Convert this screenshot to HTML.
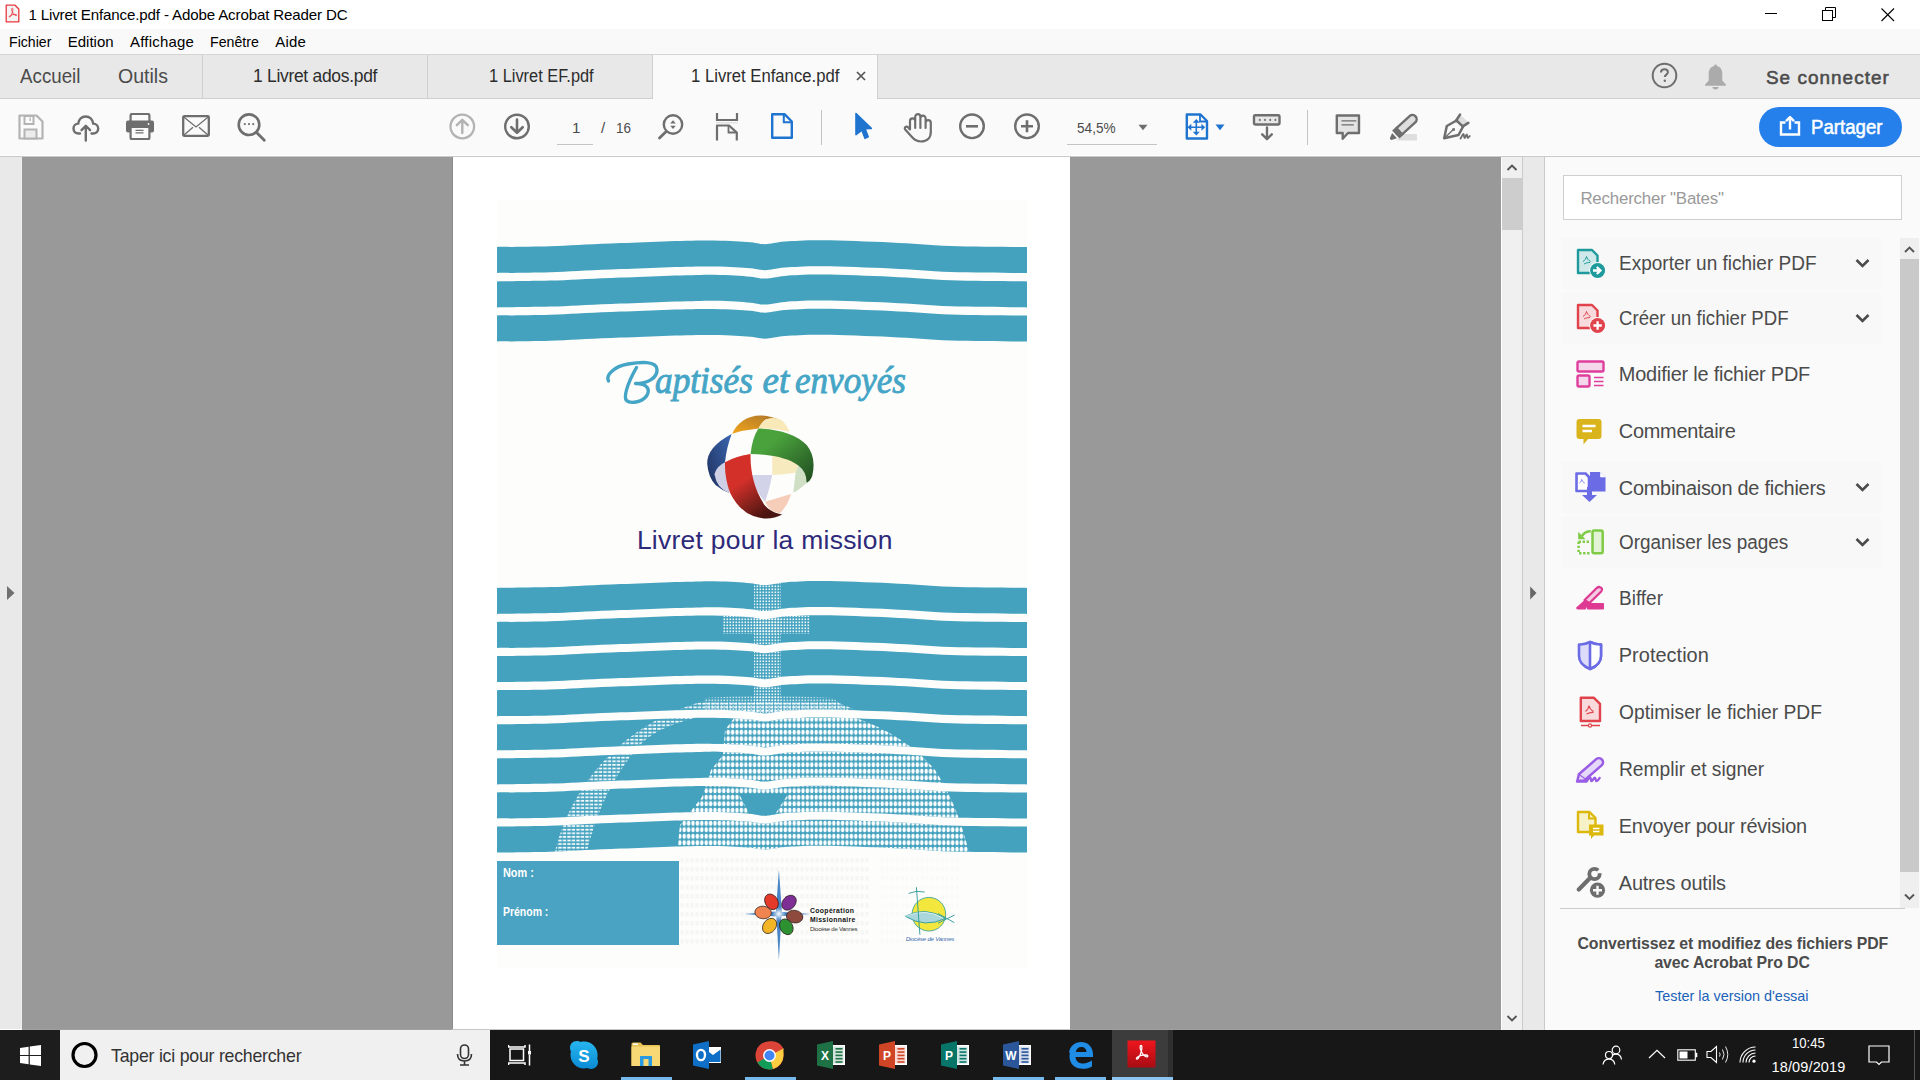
<!DOCTYPE html><html><head><meta charset="utf-8"><style>
html,body{margin:0;padding:0;width:1920px;height:1080px;overflow:hidden;background:#fff}
body{position:relative;font-family:"Liberation Sans",sans-serif}
.r{position:absolute;display:block}
.t{position:absolute;white-space:nowrap;line-height:1;font-family:"Liberation Sans",sans-serif}
</style></head><body>
<div class="r" style="left:0px;top:0px;width:1920px;height:29px;background:#ffffff;"></div>
<div class="r" style="left:0px;top:29px;width:1920px;height:25px;background:#f9f9f9;"></div>
<div class="r" style="left:0px;top:54px;width:1920px;height:1px;background:#d4d4d4;"></div>
<div class="r" style="left:0px;top:55px;width:1920px;height:43px;background:#e8e8e8;"></div>
<div class="r" style="left:0px;top:98px;width:1920px;height:1px;background:#cfcfcf;"></div>
<div class="r" style="left:0px;top:99px;width:1920px;height:56px;background:#fafafa;"></div>
<div class="r" style="left:0px;top:155px;width:1920px;height:1px;background:#ffffff;"></div>
<div class="r" style="left:0px;top:156px;width:1920px;height:1px;background:#c9c9c9;"></div>
<div class="r" style="left:0px;top:157px;width:21px;height:873px;background:#e9e9e9;"></div>
<div class="r" style="left:21px;top:157px;width:1px;height:873px;background:#efefef;"></div>
<div class="r" style="left:22px;top:157px;width:1479px;height:873px;background:#999999;"></div>
<div class="r" style="left:1501px;top:157px;width:1px;height:873px;background:#ffffff;"></div>
<div class="r" style="left:1502px;top:157px;width:20px;height:873px;background:#f0f0f0;"></div>
<div class="r" style="left:1522px;top:157px;width:1px;height:873px;background:#cacaca;"></div>
<div class="r" style="left:1523px;top:157px;width:21px;height:873px;background:#e9e9e9;"></div>
<div class="r" style="left:1544px;top:157px;width:1px;height:873px;background:#cacaca;"></div>
<div class="r" style="left:1545px;top:157px;width:375px;height:873px;background:#fafafa;"></div>
<div class="r" style="left:0px;top:1030px;width:1920px;height:50px;background:#171717;"></div>
<div class="r" style="left:0px;top:1030px;width:60px;height:50px;background:#1d1d1d;"></div>
<svg class="r" style="left:5px;top:4px;" width="15" height="19" viewBox="0 0 15 19"><path d="M1.2 1.2 H10 L13.8 5 V17.8 H1.2 Z" fill="#f4f4f4" stroke="#e8393f" stroke-width="1.3" stroke-linejoin="round"/><path d="M7.4 4.2 c-1 0 -1 1.8 0 3.8 c1 2 2.5 3.5 3.4 3.6 c1.3 0.2 1.2 -1 0 -1.2 c-2 -0.3 -5 0.5 -6.2 1.6 c-0.9 0.9 0 1.6 0.8 0.6 c1 -1.2 1.8 -3.2 2.2 -5 c0.3 -1.4 0.4 -3.4 -0.2 -3.4 z" fill="none" stroke="#e8393f" stroke-width="0.9"/></svg>
<div class="t" style="left:28.40px;top:6.90px;font-size:15.12px;letter-spacing:-0.147px;color:#000;">1 Livret Enfance.pdf - Adobe Acrobat Reader DC</div>
<div class="r" style="left:1765px;top:13px;width:12px;height:1px;background:#000;"></div>
<svg class="r" style="left:1820px;top:6px;" width="18" height="16" viewBox="0 0 18 16"><rect x="2.5" y="4.5" width="10" height="10" fill="none" stroke="#000" stroke-width="1"/><path d="M5.5 4.5 V1.5 H15.5 V11.5 H12.5" fill="none" stroke="#000" stroke-width="1"/></svg>
<svg class="r" style="left:1880px;top:7px;" width="16" height="16" viewBox="0 0 16 16"><path d="M1.5 1.5 L14 14 M14 1.5 L1.5 14" stroke="#000" stroke-width="1.1"/></svg>
<div class="t" style="left:8.60px;top:34.92px;font-size:14.97px;letter-spacing:0.000px;color:#000;transform:scaleX(0.9437);transform-origin:0 0;">Fichier</div>
<div class="t" style="left:67.80px;top:34.92px;font-size:14.97px;letter-spacing:0.003px;color:#000;">Edition</div>
<div class="t" style="left:130.00px;top:34.92px;font-size:14.97px;letter-spacing:0.207px;color:#000;">Affichage</div>
<div class="t" style="left:210.00px;top:34.92px;font-size:14.97px;letter-spacing:0.000px;color:#000;transform:scaleX(0.9459);transform-origin:0 0;">Fenêtre</div>
<div class="t" style="left:275.30px;top:34.92px;font-size:14.97px;letter-spacing:0.181px;color:#000;">Aide</div>
<div class="r" style="left:202px;top:55px;width:1px;height:43px;background:#cfcfcf;"></div>
<div class="r" style="left:427px;top:55px;width:1px;height:43px;background:#cfcfcf;"></div>
<div class="r" style="left:652px;top:55px;width:1px;height:44px;background:#cfcfcf;"></div>
<div class="r" style="left:653px;top:55px;width:224px;height:44px;background:#fafafa;"></div>
<div class="r" style="left:877px;top:55px;width:1px;height:44px;background:#cfcfcf;"></div>
<div class="t" style="left:19.50px;top:65.89px;font-size:20.20px;letter-spacing:0.000px;color:#4b4b4b;transform:scaleX(0.9288);transform-origin:0 0;">Accueil</div>
<div class="t" style="left:117.50px;top:65.89px;font-size:20.20px;letter-spacing:0.000px;color:#4b4b4b;transform:scaleX(0.9682);transform-origin:0 0;">Outils</div>
<div class="t" style="left:253.00px;top:68.03px;font-size:17.44px;letter-spacing:-0.281px;color:#2c2c2c;">1 Livret ados.pdf</div>
<div class="t" style="left:488.60px;top:68.23px;font-size:17.44px;letter-spacing:0.000px;color:#2c2c2c;transform:scaleX(0.9388);transform-origin:0 0;">1 Livret EF.pdf</div>
<div class="t" style="left:691.00px;top:68.03px;font-size:17.44px;letter-spacing:0.000px;color:#2c2c2c;transform:scaleX(0.9563);transform-origin:0 0;">1 Livret Enfance.pdf</div>
<svg class="r" style="left:856px;top:71px;" width="10" height="10" viewBox="0 0 10 10"><path d="M1 1 L9 9 M9 1 L1 9" stroke="#555" stroke-width="1.7"/></svg>
<svg class="r" style="left:1651px;top:62px;" width="27" height="27" viewBox="0 0 27 27"><circle cx="13.5" cy="13.5" r="11.8" fill="none" stroke="#6e6e6e" stroke-width="2"/><path d="M10 10.5 c0 -2 1.5 -3.2 3.5 -3.2 c2 0 3.4 1.2 3.4 3 c0 2.3 -3.1 2.4 -3.1 4.8" fill="none" stroke="#6e6e6e" stroke-width="2"/><circle cx="13.8" cy="18.8" r="1.2" fill="#6e6e6e"/></svg>
<svg class="r" style="left:1704px;top:63px;" width="23" height="27" viewBox="0 0 23 27"><path d="M11.5 1.5 c1.2 0 1.4 0.8 1.4 1.6 c3.6 0.8 5.4 3.7 5.4 7.6 v6.8 l3.6 4 v1.3 H1.1 v-1.3 l3.6 -4 v-6.8 c0 -3.9 1.8 -6.8 5.4 -7.6 c0 -0.8 0.2 -1.6 1.4 -1.6z" fill="#ababab"/><path d="M8.3 24 h6.4 c-0.5 1.7 -1.7 2.5 -3.2 2.5 s-2.7 -0.8 -3.2 -2.5z" fill="#ababab"/></svg>
<div class="t" style="left:1765.90px;top:68.50px;font-size:18.90px;letter-spacing:1.059px;color:#4b4b4b;-webkit-text-stroke:0.55px #4b4b4b;">Se connecter</div>
<svg class="r" style="left:18px;top:114px;" width="26" height="26" viewBox="0 0 26 26"><path d="M1.5 1.5 H18.5 L24.5 7.5 V24.5 H1.5 Z" fill="none" stroke="#b3b3b3" stroke-width="2.2" stroke-linejoin="round"/><rect x="6.5" y="2" width="9" height="8" fill="none" stroke="#b3b3b3" stroke-width="2"/><rect x="11.5" y="3.5" width="1.3" height="3.5" fill="#b3b3b3"/><rect x="6.5" y="15.5" width="12" height="9" fill="#ececec" stroke="#b3b3b3" stroke-width="2"/></svg>
<svg class="r" style="left:72px;top:114px;" width="28" height="28" viewBox="0 0 28 28"><path d="M8 19.5 H6.5 C3.5 19.5 1.5 17.3 1.5 14.5 C1.5 11.7 3.6 9.6 6.2 9.6 C6.8 5.3 9.8 2.5 13.7 2.5 C17.6 2.5 20.6 5.3 21.2 9.6 C24 9.6 26.2 11.8 26.2 14.6 C26.2 17.4 24.1 19.5 21.3 19.5 H19.5" fill="none" stroke="#6e6e6e" stroke-width="2.4" stroke-linecap="round"/><path d="M13.8 26.5 V12.3 M9.5 16.2 L13.8 11.8 L18.1 16.2" fill="none" stroke="#6e6e6e" stroke-width="2.4" stroke-linecap="round" stroke-linejoin="round"/></svg>
<svg class="r" style="left:126px;top:113px;" width="28" height="27" viewBox="0 0 28 27"><rect x="4.6" y="1" width="18.8" height="9" rx="1.5" fill="none" stroke="#6e6e6e" stroke-width="2.2"/><rect x="0" y="7.5" width="28" height="12" rx="2" fill="#6e6e6e"/><rect x="4.6" y="14" width="18.8" height="12" rx="1" fill="#fafafa" stroke="#6e6e6e" stroke-width="2.2"/><path d="M9.5 17.4 H17.5 M9.5 19.8 H17.5" stroke="#6e6e6e" stroke-width="1.2"/><circle cx="22.5" cy="11" r="0.9" fill="#fafafa"/></svg>
<svg class="r" style="left:182px;top:115px;" width="28" height="22" viewBox="0 0 28 22"><rect x="1.2" y="1.2" width="25.6" height="19.6" rx="1" fill="none" stroke="#6e6e6e" stroke-width="2.3"/><path d="M1.5 1.8 L14 12 L26.5 1.8 M1.8 20.2 L11 12.2 M26.2 20.2 L17 12.2" fill="none" stroke="#6e6e6e" stroke-width="1.3"/></svg>
<svg class="r" style="left:236px;top:112px;" width="31" height="31" viewBox="0 0 31 31"><circle cx="13" cy="12.7" r="10.3" fill="none" stroke="#6e6e6e" stroke-width="2.6"/><path d="M20.3 20.2 L28.3 28.3" stroke="#6e6e6e" stroke-width="2.8" stroke-linecap="round"/><circle cx="8.8" cy="12.1" r="1.1" fill="#6e6e6e"/><circle cx="13" cy="12.1" r="1.1" fill="#6e6e6e"/><circle cx="17.2" cy="12.1" r="1.1" fill="#6e6e6e"/></svg>
<svg class="r" style="left:449px;top:113px;" width="27" height="27" viewBox="0 0 27 27"><circle cx="13.3" cy="13.5" r="11.8" fill="none" stroke="#b3b3b3" stroke-width="2.3"/><path d="M13.3 20 V7.3 M7.8 12.2 L13.3 6.8 L18.8 12.2" fill="none" stroke="#b3b3b3" stroke-width="2.4" stroke-linecap="round" stroke-linejoin="round"/></svg>
<svg class="r" style="left:504px;top:113px;" width="27" height="27" viewBox="0 0 27 27"><circle cx="13" cy="13.5" r="11.8" fill="none" stroke="#6e6e6e" stroke-width="2.4"/><path d="M13 6.5 V19.5 M7.3 14.2 L13 19.7 L18.7 14.2" fill="none" stroke="#6e6e6e" stroke-width="2.6" stroke-linecap="round" stroke-linejoin="round"/></svg>
<div class="t" style="left:571.90px;top:120.20px;font-size:15.12px;letter-spacing:0.000px;color:#4b4b4b;">1</div>
<div class="r" style="left:557px;top:144px;width:36px;height:1px;background:#c4c4c4;"></div>
<div class="t" style="left:601.00px;top:120.20px;font-size:15.12px;letter-spacing:0.000px;color:#4b4b4b;">/</div>
<div class="t" style="left:616.00px;top:120.20px;font-size:15.12px;letter-spacing:0.000px;color:#4b4b4b;transform:scaleX(0.8924);transform-origin:0 0;">16</div>
<svg class="r" style="left:657px;top:113px;" width="28" height="27" viewBox="0 0 28 27"><circle cx="16" cy="11.5" r="9.2" fill="none" stroke="#6e6e6e" stroke-width="2.4"/><path d="M9.2 18.5 L2.5 25" stroke="#6e6e6e" stroke-width="2.8" stroke-linecap="round"/><path d="M13.2 10.5 L16 7.3 L18.8 10.5 Z M13.2 12.8 L16 16 L18.8 12.8 Z" fill="#6e6e6e"/></svg>
<svg class="r" style="left:715px;top:112px;" width="24" height="30" viewBox="0 0 24 30"><path d="M2 1 V8 H22 V1" fill="none" stroke="#6e6e6e" stroke-width="2.2"/><rect x="1" y="10.2" width="22" height="1.2" fill="#dddddd"/><path d="M2 28.5 V13.5 H14 L21.8 20.6 V28.5" fill="none" stroke="#6e6e6e" stroke-width="2.2" stroke-linejoin="round"/><path d="M13.5 13.8 V20.5 H21.5" fill="none" stroke="#6e6e6e" stroke-width="1.8"/></svg>
<svg class="r" style="left:770px;top:112px;" width="24" height="28" viewBox="0 0 24 28"><path d="M2.2 2.2 H14.5 L21.8 9.5 V25.8 H2.2 Z" fill="none" stroke="#1f74d0" stroke-width="2.4" stroke-linejoin="round"/><path d="M13.8 2.5 V10.2 H21.5" fill="none" stroke="#1f74d0" stroke-width="2"/></svg>
<div class="r" style="left:821px;top:110px;width:1px;height:35px;background:#c4c4c4;"></div>
<svg class="r" style="left:854px;top:112px;" width="19" height="29" viewBox="0 0 19 29"><path d="M2 1.5 L17.3 16.4 L11 16.6 L14.2 24.8 L11 26.3 L7.9 18.2 L2 22.6 Z" fill="#1f74d0" stroke="#1f74d0" stroke-width="1.6" stroke-linejoin="round"/></svg>
<svg class="r" style="left:902px;top:112px;" width="31" height="31" viewBox="0 0 31 31"><path d="M8 17.5 V9 A2.6 2.6 0 0 1 13.2 9 V16 M13.2 9 V4.8 A2.6 2.6 0 0 1 18.4 4.8 V16 M18.4 6.3 A2.6 2.6 0 0 1 23.6 6.3 V16 M23.6 10.8 A2.6 2.6 0 0 1 28.8 10.8 V20 C28.8 26 25 29.5 19 29.5 C14.5 29.5 12 27.5 9.5 24.5 L3.2 17.5 C2 16 3.5 14 5.5 14.8 L8 17.5" fill="none" stroke="#6e6e6e" stroke-width="2.2" stroke-linejoin="round" stroke-linecap="round"/></svg>
<svg class="r" style="left:958px;top:112px;" width="28" height="28" viewBox="0 0 28 28"><circle cx="14" cy="14.3" r="11.8" fill="none" stroke="#6e6e6e" stroke-width="2.4"/><path d="M8 14.3 H20" stroke="#6e6e6e" stroke-width="2.6"/></svg>
<svg class="r" style="left:1013px;top:112px;" width="28" height="28" viewBox="0 0 28 28"><circle cx="14" cy="14.3" r="11.8" fill="none" stroke="#6e6e6e" stroke-width="2.4"/><path d="M8 14.3 H20 M14 8.3 V20.3" stroke="#6e6e6e" stroke-width="2.6"/></svg>
<div class="t" style="left:1077.40px;top:120.00px;font-size:15.12px;letter-spacing:0.000px;color:#4b4b4b;transform:scaleX(0.9007);transform-origin:0 0;">54,5%</div>
<svg class="r" style="left:1138px;top:124px;" width="10" height="7" viewBox="0 0 10 7"><path d="M0.5 0.8 H9.5 L5 6.2 Z" fill="#6e6e6e"/></svg>
<div class="r" style="left:1067px;top:144px;width:90px;height:1px;background:#c4c4c4;"></div>
<svg class="r" style="left:1184px;top:112px;" width="26" height="29" viewBox="0 0 26 29"><path d="M2.8 2.5 H16.5 L23 9 V26.5 H2.8 Z" fill="none" stroke="#1f74d0" stroke-width="2.4" stroke-linejoin="round"/><path d="M16 2.5 V9.5 H23" fill="none" stroke="#1f74d0" stroke-width="1.8"/><path d="M12.3 9 V21.5 M5.5 15.3 H19.2" stroke="#1f74d0" stroke-width="1.6"/><path d="M12.3 7 L8.8 10.8 H15.8 Z M12.3 23.5 L8.8 19.7 H15.8 Z M3.5 15.3 L7.3 11.8 V18.8 Z M21.2 15.3 L17.4 11.8 V18.8 Z" fill="#1f74d0"/></svg>
<svg class="r" style="left:1215px;top:124px;" width="10" height="7" viewBox="0 0 10 7"><path d="M0.5 0.5 H9.5 L5 6.2 Z" fill="#1f74d0"/></svg>
<svg class="r" style="left:1252px;top:113px;" width="30" height="29" viewBox="0 0 30 29"><rect x="2" y="2.2" width="25.5" height="9.3" rx="1.2" fill="#e8e8e8" stroke="#6e6e6e" stroke-width="2.4"/><path d="M6.5 6.9 l1.3 -1.3 l1.3 1.3 l-1.3 1.3 z M11.7 6.9 l1.3 -1.3 l1.3 1.3 l-1.3 1.3 z M16.9 6.9 l1.3 -1.3 l1.3 1.3 l-1.3 1.3 z M22.1 6.9 l1.3 -1.3 l1.3 1.3 l-1.3 1.3 z" fill="#6e6e6e"/><path d="M15 14.5 V26 M10.2 21.3 L15 26.2 L19.8 21.3" fill="none" stroke="#6e6e6e" stroke-width="2.4" stroke-linecap="round" stroke-linejoin="round"/></svg>
<div class="r" style="left:1307px;top:110px;width:1px;height:35px;background:#c4c4c4;"></div>
<svg class="r" style="left:1334px;top:113px;" width="28" height="29" viewBox="0 0 28 29"><path d="M2.8 2.5 H25 V20 H14 L8.7 25.8 V20 H2.8 Z" fill="#e3e3e3" stroke="#6e6e6e" stroke-width="2.4" stroke-linejoin="round"/><path d="M7.5 7.8 H22.3 M7.5 11.8 H19.8" stroke="#6e6e6e" stroke-width="1.3"/></svg>
<svg class="r" style="left:1380px;top:106px;" width="40" height="40" viewBox="0 0 40 40"><path d="M16.5 34.6 L23 28.1 H37 V34.6 Z" fill="#dedede"/><g transform="translate(16,28.3) rotate(-42.5)"><rect x="1" y="-4.2" width="25.5" height="8.4" rx="4.2" fill="#dedede" stroke="#6e6e6e" stroke-width="2.4"/><rect x="-0.3" y="-5.4" width="6" height="10.8" fill="#6e6e6e"/><path d="M-2 -3.6 L-7.2 -1.2 Q-8.2 0 -7.2 1.2 L-2 3.6 Z" fill="#6e6e6e"/></g></svg>
<svg class="r" style="left:1440px;top:106px;" width="40" height="40" viewBox="0 0 40 40"><path d="M20 8.5 L28.5 16.5 L23 20.5 L16.5 14.5 Z" fill="#dedede"/><path d="M4.2 32.3 L6.8 20 L16.5 14.5 L23 20.7 L18.5 29 Z" fill="none" stroke="#6e6e6e" stroke-width="2.5" stroke-linejoin="round"/><path d="M16 14.8 L20 8.6 M22.8 20.3 L28.3 16.8" stroke="#6e6e6e" stroke-width="2.6" stroke-linecap="round"/><path d="M5 31.5 L13.4 23.5" stroke="#6e6e6e" stroke-width="1.3"/><rect x="12.3" y="22.2" width="2.6" height="2.6" fill="#6e6e6e"/><path d="M20.5 32.5 c1 -1 2 -4.5 3 -4.5 c0.8 0 0.2 4 1 4 c0.8 0 1.3 -3.6 2.3 -3.6 c0.7 0 0.1 3.6 1 3.6 c0.7 0 1.2 -1.5 2 -2" fill="none" stroke="#6e6e6e" stroke-width="1.8" stroke-linecap="round" stroke-linejoin="round"/></svg>
<div class="r" style="left:1759px;top:107px;width:143px;height:40px;background:#2680eb;border-radius:20px;"></div>
<svg class="r" style="left:1779px;top:115px;" width="22" height="21" viewBox="0 0 22 21"><path d="M6.5 7.5 H2 V19.5 H20 V7.5 H15.5" fill="none" stroke="#fff" stroke-width="2.4"/><path d="M11 14.5 V2.5 M7 6.2 L11 2 L15 6.2" fill="none" stroke="#fff" stroke-width="2.4" stroke-linejoin="round"/></svg>
<div class="t" style="left:1811.00px;top:118.38px;font-size:19.62px;letter-spacing:0.000px;color:#ffffff;transform:scaleX(0.9502);transform-origin:0 0;-webkit-text-stroke:0.5px #ffffff;">Partager</div>
<svg class="r" style="left:5px;top:584px;" width="12" height="18" viewBox="0 0 12 18"><path d="M2 2 L9.5 9 L2 16 Z" fill="#707070"/></svg>
<svg class="r" style="left:1527px;top:585px;" width="11" height="16" viewBox="0 0 11 16"><path d="M3.2 1.5 L9.5 8 L3.2 14.5 Z" fill="#666"/></svg>
<div class="r" style="left:1502px;top:178px;width:20px;height:52px;background:#cdcdcd;"></div>
<svg class="r" style="left:1504px;top:161px;" width="16" height="12" viewBox="0 0 16 12"><path d="M3.5 9 L8 4.5 L12.5 9" fill="none" stroke="#555" stroke-width="1.9"/></svg>
<svg class="r" style="left:1504px;top:1013px;" width="16" height="12" viewBox="0 0 16 12"><path d="M3.5 3 L8 7.5 L12.5 3" fill="none" stroke="#555" stroke-width="1.9"/></svg>
<div class="r" style="left:452px;top:157px;width:618px;height:873px;background:#ffffff;"></div>
<div class="r" style="left:452px;top:157px;width:1px;height:873px;background:#8c8c8c;"></div>
<div class="r" style="left:22px;top:1029px;width:430px;height:1px;background:#a0a0a0;"></div>
<div class="r" style="left:452px;top:1029px;width:618px;height:1px;background:#c6c6c6;"></div>
<div class="r" style="left:1070px;top:1029px;width:431px;height:1px;background:#a0a0a0;"></div>
<div class="r" style="left:0px;top:1029px;width:21px;height:1px;background:#ffffff;"></div>
<div class="r" style="left:497px;top:200px;width:530px;height:768px;background:#fdfdfb;"></div>
<svg class="r" style="left:452px;top:157px;" width="618" height="873" viewBox="452 157 618 873"><g fill="#45a2bf"><path d="M497 247.00 C505.8 246.87 531.0 246.78 550.0 246.20 C569.0 245.62 585.8 244.45 611.0 243.50 C636.2 242.55 678.3 240.75 701.0 240.50 C723.7 240.25 736.3 241.38 747.0 242.00 C757.7 242.62 758.7 244.28 765.0 244.20 C771.3 244.12 775.3 242.17 785.0 241.50 C794.7 240.83 805.3 240.05 823.0 240.20 C840.7 240.35 869.7 241.45 891.0 242.40 C912.3 243.35 928.3 245.13 951.0 245.90 C973.7 246.67 1014.3 246.82 1027.0 247.00 L1027 273.00 C1014.3 272.82 973.7 272.67 951.0 271.90 C928.3 271.13 912.3 269.35 891.0 268.40 C869.7 267.45 840.7 266.35 823.0 266.20 C805.3 266.05 794.7 266.83 785.0 267.50 C775.3 268.17 771.3 270.12 765.0 270.20 C758.7 270.28 757.7 268.62 747.0 268.00 C736.3 267.38 723.7 266.25 701.0 266.50 C678.3 266.75 636.2 268.55 611.0 269.50 C585.8 270.45 569.0 271.62 550.0 272.20 C531.0 272.78 505.8 272.87 497.0 273.00 Z"/><path d="M497 281.40 C505.8 281.27 531.0 281.18 550.0 280.60 C569.0 280.02 585.8 278.85 611.0 277.90 C636.2 276.95 678.3 275.15 701.0 274.90 C723.7 274.65 736.3 275.78 747.0 276.40 C757.7 277.02 758.7 278.68 765.0 278.60 C771.3 278.52 775.3 276.57 785.0 275.90 C794.7 275.23 805.3 274.45 823.0 274.60 C840.7 274.75 869.7 275.85 891.0 276.80 C912.3 277.75 928.3 279.53 951.0 280.30 C973.7 281.07 1014.3 281.22 1027.0 281.40 L1027 307.40 C1014.3 307.22 973.7 307.07 951.0 306.30 C928.3 305.53 912.3 303.75 891.0 302.80 C869.7 301.85 840.7 300.75 823.0 300.60 C805.3 300.45 794.7 301.23 785.0 301.90 C775.3 302.57 771.3 304.52 765.0 304.60 C758.7 304.68 757.7 303.02 747.0 302.40 C736.3 301.78 723.7 300.65 701.0 300.90 C678.3 301.15 636.2 302.95 611.0 303.90 C585.8 304.85 569.0 306.02 550.0 306.60 C531.0 307.18 505.8 307.27 497.0 307.40 Z"/><path d="M497 315.50 C505.8 315.37 531.0 315.28 550.0 314.70 C569.0 314.12 585.8 312.95 611.0 312.00 C636.2 311.05 678.3 309.25 701.0 309.00 C723.7 308.75 736.3 309.88 747.0 310.50 C757.7 311.12 758.7 312.78 765.0 312.70 C771.3 312.62 775.3 310.67 785.0 310.00 C794.7 309.33 805.3 308.55 823.0 308.70 C840.7 308.85 869.7 309.95 891.0 310.90 C912.3 311.85 928.3 313.63 951.0 314.40 C973.7 315.17 1014.3 315.32 1027.0 315.50 L1027 341.50 C1014.3 341.32 973.7 341.17 951.0 340.40 C928.3 339.63 912.3 337.85 891.0 336.90 C869.7 335.95 840.7 334.85 823.0 334.70 C805.3 334.55 794.7 335.33 785.0 336.00 C775.3 336.67 771.3 338.62 765.0 338.70 C758.7 338.78 757.7 337.12 747.0 336.50 C736.3 335.88 723.7 334.75 701.0 335.00 C678.3 335.25 636.2 337.05 611.0 338.00 C585.8 338.95 569.0 340.12 550.0 340.70 C531.0 341.28 505.8 341.37 497.0 341.50 Z"/></g></svg>
<svg class="r" style="left:600px;top:355px" width="65" height="55" viewBox="600 355 65 55"><path d="M608.5 381 C605.5 375 614 366.5 628 364 C640 362 656.5 360.5 657 369.5 C657.5 378.5 647 383.5 635.5 383.5 C648 383.5 650.5 390 646.5 396 C642 402.5 630 404 626.5 400.5 C623.5 397 627 384 636.5 367.5" fill="none" stroke="#45a5c6" stroke-width="3.4" stroke-linecap="round" stroke-linejoin="round"/></svg>
<div class="t" style="left:655px;top:361.5px;font-family:'Liberation Serif',serif;font-style:italic;font-size:37px;line-height:1;color:#45a5c6;-webkit-text-stroke:0.9px #45a5c6;transform:scaleX(0.953);transform-origin:0 0;">aptisés</div>
<div class="t" style="left:762.5px;top:361.5px;font-family:'Liberation Serif',serif;font-style:italic;font-size:37px;line-height:1;color:#45a5c6;-webkit-text-stroke:0.9px #45a5c6;transform:scaleX(1.0);transform-origin:0 0;">et</div>
<div class="t" style="left:795px;top:361.5px;font-family:'Liberation Serif',serif;font-style:italic;font-size:37px;line-height:1;color:#45a5c6;-webkit-text-stroke:0.9px #45a5c6;transform:scaleX(0.948);transform-origin:0 0;">envoyés</div>
<svg class="r" style="left:700px;top:405px" width="120" height="120" viewBox="0 0 1080 1080">
<defs>
<linearGradient id="gor" x1="0" y1="1" x2="1" y2="0"><stop offset="0" stop-color="#f2a51c"/><stop offset="1" stop-color="#a9742a"/></linearGradient>
<linearGradient id="gbl" x1="1" y1="0" x2="0" y2="1"><stop offset="0" stop-color="#3a66b0"/><stop offset="1" stop-color="#1f2f5a"/></linearGradient>
<linearGradient id="ggr" x1="0" y1="0" x2="1" y2="1"><stop offset="0.3" stop-color="#4aa23c"/><stop offset="1" stop-color="#1f4a20"/></linearGradient>
<linearGradient id="grd" x1="0" y1="0" x2="0.6" y2="1"><stop offset="0.45" stop-color="#d3302a"/><stop offset="1" stop-color="#4a1510"/></linearGradient>
</defs>
<path d="M285 262 Q60 380 65 530 Q75 650 140 720 Q200 770 260 790 L225 515 Q240 380 285 262 Z" fill="url(#gbl)"/>
<path d="M130 620 Q150 550 225 515 L262 790 Q150 750 130 620 Z" fill="#cfd0e6"/>
<path d="M290 258 C350 120 520 30 750 150 Q640 110 590 130 Q550 160 525 212 Q400 225 290 258 Z" fill="url(#gor)"/>
<path d="M525 212 Q570 120 660 118 Q720 125 750 150 Q790 190 805 240 Q660 205 525 212 Z" fill="#f9e9b8"/>
<path d="M650 440 Q800 470 885 545 L860 610 Q760 625 650 630 Z" fill="#f8eabf"/>
<path d="M885 545 Q1000 600 970 690 Q900 760 840 790 L860 610 Z" fill="#cfe0c4"/>
<path d="M525 212 Q820 220 960 360 Q1050 470 1010 640 Q990 690 960 700 Q960 600 885 545 Q760 450 455 440 Q470 300 525 212 Z" fill="url(#ggr)"/>
<path d="M455 630 L650 630 Q620 780 585 870 Q500 780 455 630 Z" fill="#d2d2e8"/>
<path d="M585 870 Q700 835 820 800 Q790 900 720 975 Q620 960 585 870 Z" fill="#f6cdb9"/>
<path d="M225 515 Q330 455 455 440 Q450 700 580 900 Q640 970 740 985 Q620 1050 480 1000 Q350 950 270 790 Q220 650 225 515 Z" fill="url(#grd)"/>
</svg>
<div class="t" style="left:636.90px;top:526.89px;font-size:26.45px;letter-spacing:0.275px;color:#2e2a7a;">Livret pour la mission</div>
<svg class="r" style="left:452px;top:157px" width="618" height="873" viewBox="452 157 618 873">
<defs>
<pattern id="dots" width="4.4" height="6.5" patternUnits="userSpaceOnUse" y="1"><ellipse cx="2.2" cy="3.25" rx="1.7" ry="2.6" fill="#ffffff"/></pattern>
<pattern id="dots2" width="4.5" height="3.6" patternUnits="userSpaceOnUse"><rect x="0.3" y="0.8" width="3.4" height="1.7" fill="#ffffff"/></pattern>
<pattern id="dots3" width="3" height="3" patternUnits="userSpaceOnUse"><rect x="0.5" y="0.5" width="1.6" height="1.6" fill="#ffffff"/></pattern>
<clipPath id="bandclip"><path d="M497 587.90 C505.8 587.77 531.0 587.68 550.0 587.10 C569.0 586.52 585.8 585.35 611.0 584.40 C636.2 583.45 678.3 581.65 701.0 581.40 C723.7 581.15 736.3 582.28 747.0 582.90 C757.7 583.52 758.7 585.18 765.0 585.10 C771.3 585.02 775.3 583.07 785.0 582.40 C794.7 581.73 805.3 580.95 823.0 581.10 C840.7 581.25 869.7 582.35 891.0 583.30 C912.3 584.25 928.3 586.03 951.0 586.80 C973.7 587.57 1014.3 587.72 1027.0 587.90 L1027 613.90 C1014.3 613.72 973.7 613.57 951.0 612.80 C928.3 612.03 912.3 610.25 891.0 609.30 C869.7 608.35 840.7 607.25 823.0 607.10 C805.3 606.95 794.7 607.73 785.0 608.40 C775.3 609.07 771.3 611.02 765.0 611.10 C758.7 611.18 757.7 609.52 747.0 608.90 C736.3 608.28 723.7 607.15 701.0 607.40 C678.3 607.65 636.2 609.45 611.0 610.40 C585.8 611.35 569.0 612.52 550.0 613.10 C531.0 613.68 505.8 613.77 497.0 613.90 Z"/><path d="M497 622.00 C505.8 621.87 531.0 621.78 550.0 621.20 C569.0 620.62 585.8 619.45 611.0 618.50 C636.2 617.55 678.3 615.75 701.0 615.50 C723.7 615.25 736.3 616.38 747.0 617.00 C757.7 617.62 758.7 619.28 765.0 619.20 C771.3 619.12 775.3 617.17 785.0 616.50 C794.7 615.83 805.3 615.05 823.0 615.20 C840.7 615.35 869.7 616.45 891.0 617.40 C912.3 618.35 928.3 620.13 951.0 620.90 C973.7 621.67 1014.3 621.82 1027.0 622.00 L1027 648.00 C1014.3 647.82 973.7 647.67 951.0 646.90 C928.3 646.13 912.3 644.35 891.0 643.40 C869.7 642.45 840.7 641.35 823.0 641.20 C805.3 641.05 794.7 641.83 785.0 642.50 C775.3 643.17 771.3 645.12 765.0 645.20 C758.7 645.28 757.7 643.62 747.0 643.00 C736.3 642.38 723.7 641.25 701.0 641.50 C678.3 641.75 636.2 643.55 611.0 644.50 C585.8 645.45 569.0 646.62 550.0 647.20 C531.0 647.78 505.8 647.87 497.0 648.00 Z"/><path d="M497 656.10 C505.8 655.97 531.0 655.88 550.0 655.30 C569.0 654.72 585.8 653.55 611.0 652.60 C636.2 651.65 678.3 649.85 701.0 649.60 C723.7 649.35 736.3 650.48 747.0 651.10 C757.7 651.72 758.7 653.38 765.0 653.30 C771.3 653.22 775.3 651.27 785.0 650.60 C794.7 649.93 805.3 649.15 823.0 649.30 C840.7 649.45 869.7 650.55 891.0 651.50 C912.3 652.45 928.3 654.23 951.0 655.00 C973.7 655.77 1014.3 655.92 1027.0 656.10 L1027 682.10 C1014.3 681.92 973.7 681.77 951.0 681.00 C928.3 680.23 912.3 678.45 891.0 677.50 C869.7 676.55 840.7 675.45 823.0 675.30 C805.3 675.15 794.7 675.93 785.0 676.60 C775.3 677.27 771.3 679.22 765.0 679.30 C758.7 679.38 757.7 677.72 747.0 677.10 C736.3 676.48 723.7 675.35 701.0 675.60 C678.3 675.85 636.2 677.65 611.0 678.60 C585.8 679.55 569.0 680.72 550.0 681.30 C531.0 681.88 505.8 681.97 497.0 682.10 Z"/><path d="M497 690.20 C505.8 690.07 531.0 689.98 550.0 689.40 C569.0 688.82 585.8 687.65 611.0 686.70 C636.2 685.75 678.3 683.95 701.0 683.70 C723.7 683.45 736.3 684.58 747.0 685.20 C757.7 685.82 758.7 687.48 765.0 687.40 C771.3 687.32 775.3 685.37 785.0 684.70 C794.7 684.03 805.3 683.25 823.0 683.40 C840.7 683.55 869.7 684.65 891.0 685.60 C912.3 686.55 928.3 688.33 951.0 689.10 C973.7 689.87 1014.3 690.02 1027.0 690.20 L1027 716.20 C1014.3 716.02 973.7 715.87 951.0 715.10 C928.3 714.33 912.3 712.55 891.0 711.60 C869.7 710.65 840.7 709.55 823.0 709.40 C805.3 709.25 794.7 710.03 785.0 710.70 C775.3 711.37 771.3 713.32 765.0 713.40 C758.7 713.48 757.7 711.82 747.0 711.20 C736.3 710.58 723.7 709.45 701.0 709.70 C678.3 709.95 636.2 711.75 611.0 712.70 C585.8 713.65 569.0 714.82 550.0 715.40 C531.0 715.98 505.8 716.07 497.0 716.20 Z"/><path d="M497 724.30 C505.8 724.17 531.0 724.08 550.0 723.50 C569.0 722.92 585.8 721.75 611.0 720.80 C636.2 719.85 678.3 718.05 701.0 717.80 C723.7 717.55 736.3 718.68 747.0 719.30 C757.7 719.92 758.7 721.58 765.0 721.50 C771.3 721.42 775.3 719.47 785.0 718.80 C794.7 718.13 805.3 717.35 823.0 717.50 C840.7 717.65 869.7 718.75 891.0 719.70 C912.3 720.65 928.3 722.43 951.0 723.20 C973.7 723.97 1014.3 724.12 1027.0 724.30 L1027 750.30 C1014.3 750.12 973.7 749.97 951.0 749.20 C928.3 748.43 912.3 746.65 891.0 745.70 C869.7 744.75 840.7 743.65 823.0 743.50 C805.3 743.35 794.7 744.13 785.0 744.80 C775.3 745.47 771.3 747.42 765.0 747.50 C758.7 747.58 757.7 745.92 747.0 745.30 C736.3 744.68 723.7 743.55 701.0 743.80 C678.3 744.05 636.2 745.85 611.0 746.80 C585.8 747.75 569.0 748.92 550.0 749.50 C531.0 750.08 505.8 750.17 497.0 750.30 Z"/><path d="M497 758.40 C505.8 758.27 531.0 758.18 550.0 757.60 C569.0 757.02 585.8 755.85 611.0 754.90 C636.2 753.95 678.3 752.15 701.0 751.90 C723.7 751.65 736.3 752.78 747.0 753.40 C757.7 754.02 758.7 755.68 765.0 755.60 C771.3 755.52 775.3 753.57 785.0 752.90 C794.7 752.23 805.3 751.45 823.0 751.60 C840.7 751.75 869.7 752.85 891.0 753.80 C912.3 754.75 928.3 756.53 951.0 757.30 C973.7 758.07 1014.3 758.22 1027.0 758.40 L1027 784.40 C1014.3 784.22 973.7 784.07 951.0 783.30 C928.3 782.53 912.3 780.75 891.0 779.80 C869.7 778.85 840.7 777.75 823.0 777.60 C805.3 777.45 794.7 778.23 785.0 778.90 C775.3 779.57 771.3 781.52 765.0 781.60 C758.7 781.68 757.7 780.02 747.0 779.40 C736.3 778.78 723.7 777.65 701.0 777.90 C678.3 778.15 636.2 779.95 611.0 780.90 C585.8 781.85 569.0 783.02 550.0 783.60 C531.0 784.18 505.8 784.27 497.0 784.40 Z"/><path d="M497 792.50 C505.8 792.37 531.0 792.28 550.0 791.70 C569.0 791.12 585.8 789.95 611.0 789.00 C636.2 788.05 678.3 786.25 701.0 786.00 C723.7 785.75 736.3 786.88 747.0 787.50 C757.7 788.12 758.7 789.78 765.0 789.70 C771.3 789.62 775.3 787.67 785.0 787.00 C794.7 786.33 805.3 785.55 823.0 785.70 C840.7 785.85 869.7 786.95 891.0 787.90 C912.3 788.85 928.3 790.63 951.0 791.40 C973.7 792.17 1014.3 792.32 1027.0 792.50 L1027 818.50 C1014.3 818.32 973.7 818.17 951.0 817.40 C928.3 816.63 912.3 814.85 891.0 813.90 C869.7 812.95 840.7 811.85 823.0 811.70 C805.3 811.55 794.7 812.33 785.0 813.00 C775.3 813.67 771.3 815.62 765.0 815.70 C758.7 815.78 757.7 814.12 747.0 813.50 C736.3 812.88 723.7 811.75 701.0 812.00 C678.3 812.25 636.2 814.05 611.0 815.00 C585.8 815.95 569.0 817.12 550.0 817.70 C531.0 818.28 505.8 818.37 497.0 818.50 Z"/><path d="M497 826.60 C505.8 826.47 531.0 826.38 550.0 825.80 C569.0 825.22 585.8 824.05 611.0 823.10 C636.2 822.15 678.3 820.35 701.0 820.10 C723.7 819.85 736.3 820.98 747.0 821.60 C757.7 822.22 758.7 823.88 765.0 823.80 C771.3 823.72 775.3 821.77 785.0 821.10 C794.7 820.43 805.3 819.65 823.0 819.80 C840.7 819.95 869.7 821.05 891.0 822.00 C912.3 822.95 928.3 824.73 951.0 825.50 C973.7 826.27 1014.3 826.42 1027.0 826.60 L1027 852.60 C1014.3 852.42 973.7 852.27 951.0 851.50 C928.3 850.73 912.3 848.95 891.0 848.00 C869.7 847.05 840.7 845.95 823.0 845.80 C805.3 845.65 794.7 846.43 785.0 847.10 C775.3 847.77 771.3 849.72 765.0 849.80 C758.7 849.88 757.7 848.22 747.0 847.60 C736.3 846.98 723.7 845.85 701.0 846.10 C678.3 846.35 636.2 848.15 611.0 849.10 C585.8 850.05 569.0 851.22 550.0 851.80 C531.0 852.38 505.8 852.47 497.0 852.60 Z"/></clipPath>
</defs>
<g fill="#45a2bf"><path d="M497 587.90 C505.8 587.77 531.0 587.68 550.0 587.10 C569.0 586.52 585.8 585.35 611.0 584.40 C636.2 583.45 678.3 581.65 701.0 581.40 C723.7 581.15 736.3 582.28 747.0 582.90 C757.7 583.52 758.7 585.18 765.0 585.10 C771.3 585.02 775.3 583.07 785.0 582.40 C794.7 581.73 805.3 580.95 823.0 581.10 C840.7 581.25 869.7 582.35 891.0 583.30 C912.3 584.25 928.3 586.03 951.0 586.80 C973.7 587.57 1014.3 587.72 1027.0 587.90 L1027 613.90 C1014.3 613.72 973.7 613.57 951.0 612.80 C928.3 612.03 912.3 610.25 891.0 609.30 C869.7 608.35 840.7 607.25 823.0 607.10 C805.3 606.95 794.7 607.73 785.0 608.40 C775.3 609.07 771.3 611.02 765.0 611.10 C758.7 611.18 757.7 609.52 747.0 608.90 C736.3 608.28 723.7 607.15 701.0 607.40 C678.3 607.65 636.2 609.45 611.0 610.40 C585.8 611.35 569.0 612.52 550.0 613.10 C531.0 613.68 505.8 613.77 497.0 613.90 Z"/><path d="M497 622.00 C505.8 621.87 531.0 621.78 550.0 621.20 C569.0 620.62 585.8 619.45 611.0 618.50 C636.2 617.55 678.3 615.75 701.0 615.50 C723.7 615.25 736.3 616.38 747.0 617.00 C757.7 617.62 758.7 619.28 765.0 619.20 C771.3 619.12 775.3 617.17 785.0 616.50 C794.7 615.83 805.3 615.05 823.0 615.20 C840.7 615.35 869.7 616.45 891.0 617.40 C912.3 618.35 928.3 620.13 951.0 620.90 C973.7 621.67 1014.3 621.82 1027.0 622.00 L1027 648.00 C1014.3 647.82 973.7 647.67 951.0 646.90 C928.3 646.13 912.3 644.35 891.0 643.40 C869.7 642.45 840.7 641.35 823.0 641.20 C805.3 641.05 794.7 641.83 785.0 642.50 C775.3 643.17 771.3 645.12 765.0 645.20 C758.7 645.28 757.7 643.62 747.0 643.00 C736.3 642.38 723.7 641.25 701.0 641.50 C678.3 641.75 636.2 643.55 611.0 644.50 C585.8 645.45 569.0 646.62 550.0 647.20 C531.0 647.78 505.8 647.87 497.0 648.00 Z"/><path d="M497 656.10 C505.8 655.97 531.0 655.88 550.0 655.30 C569.0 654.72 585.8 653.55 611.0 652.60 C636.2 651.65 678.3 649.85 701.0 649.60 C723.7 649.35 736.3 650.48 747.0 651.10 C757.7 651.72 758.7 653.38 765.0 653.30 C771.3 653.22 775.3 651.27 785.0 650.60 C794.7 649.93 805.3 649.15 823.0 649.30 C840.7 649.45 869.7 650.55 891.0 651.50 C912.3 652.45 928.3 654.23 951.0 655.00 C973.7 655.77 1014.3 655.92 1027.0 656.10 L1027 682.10 C1014.3 681.92 973.7 681.77 951.0 681.00 C928.3 680.23 912.3 678.45 891.0 677.50 C869.7 676.55 840.7 675.45 823.0 675.30 C805.3 675.15 794.7 675.93 785.0 676.60 C775.3 677.27 771.3 679.22 765.0 679.30 C758.7 679.38 757.7 677.72 747.0 677.10 C736.3 676.48 723.7 675.35 701.0 675.60 C678.3 675.85 636.2 677.65 611.0 678.60 C585.8 679.55 569.0 680.72 550.0 681.30 C531.0 681.88 505.8 681.97 497.0 682.10 Z"/><path d="M497 690.20 C505.8 690.07 531.0 689.98 550.0 689.40 C569.0 688.82 585.8 687.65 611.0 686.70 C636.2 685.75 678.3 683.95 701.0 683.70 C723.7 683.45 736.3 684.58 747.0 685.20 C757.7 685.82 758.7 687.48 765.0 687.40 C771.3 687.32 775.3 685.37 785.0 684.70 C794.7 684.03 805.3 683.25 823.0 683.40 C840.7 683.55 869.7 684.65 891.0 685.60 C912.3 686.55 928.3 688.33 951.0 689.10 C973.7 689.87 1014.3 690.02 1027.0 690.20 L1027 716.20 C1014.3 716.02 973.7 715.87 951.0 715.10 C928.3 714.33 912.3 712.55 891.0 711.60 C869.7 710.65 840.7 709.55 823.0 709.40 C805.3 709.25 794.7 710.03 785.0 710.70 C775.3 711.37 771.3 713.32 765.0 713.40 C758.7 713.48 757.7 711.82 747.0 711.20 C736.3 710.58 723.7 709.45 701.0 709.70 C678.3 709.95 636.2 711.75 611.0 712.70 C585.8 713.65 569.0 714.82 550.0 715.40 C531.0 715.98 505.8 716.07 497.0 716.20 Z"/><path d="M497 724.30 C505.8 724.17 531.0 724.08 550.0 723.50 C569.0 722.92 585.8 721.75 611.0 720.80 C636.2 719.85 678.3 718.05 701.0 717.80 C723.7 717.55 736.3 718.68 747.0 719.30 C757.7 719.92 758.7 721.58 765.0 721.50 C771.3 721.42 775.3 719.47 785.0 718.80 C794.7 718.13 805.3 717.35 823.0 717.50 C840.7 717.65 869.7 718.75 891.0 719.70 C912.3 720.65 928.3 722.43 951.0 723.20 C973.7 723.97 1014.3 724.12 1027.0 724.30 L1027 750.30 C1014.3 750.12 973.7 749.97 951.0 749.20 C928.3 748.43 912.3 746.65 891.0 745.70 C869.7 744.75 840.7 743.65 823.0 743.50 C805.3 743.35 794.7 744.13 785.0 744.80 C775.3 745.47 771.3 747.42 765.0 747.50 C758.7 747.58 757.7 745.92 747.0 745.30 C736.3 744.68 723.7 743.55 701.0 743.80 C678.3 744.05 636.2 745.85 611.0 746.80 C585.8 747.75 569.0 748.92 550.0 749.50 C531.0 750.08 505.8 750.17 497.0 750.30 Z"/><path d="M497 758.40 C505.8 758.27 531.0 758.18 550.0 757.60 C569.0 757.02 585.8 755.85 611.0 754.90 C636.2 753.95 678.3 752.15 701.0 751.90 C723.7 751.65 736.3 752.78 747.0 753.40 C757.7 754.02 758.7 755.68 765.0 755.60 C771.3 755.52 775.3 753.57 785.0 752.90 C794.7 752.23 805.3 751.45 823.0 751.60 C840.7 751.75 869.7 752.85 891.0 753.80 C912.3 754.75 928.3 756.53 951.0 757.30 C973.7 758.07 1014.3 758.22 1027.0 758.40 L1027 784.40 C1014.3 784.22 973.7 784.07 951.0 783.30 C928.3 782.53 912.3 780.75 891.0 779.80 C869.7 778.85 840.7 777.75 823.0 777.60 C805.3 777.45 794.7 778.23 785.0 778.90 C775.3 779.57 771.3 781.52 765.0 781.60 C758.7 781.68 757.7 780.02 747.0 779.40 C736.3 778.78 723.7 777.65 701.0 777.90 C678.3 778.15 636.2 779.95 611.0 780.90 C585.8 781.85 569.0 783.02 550.0 783.60 C531.0 784.18 505.8 784.27 497.0 784.40 Z"/><path d="M497 792.50 C505.8 792.37 531.0 792.28 550.0 791.70 C569.0 791.12 585.8 789.95 611.0 789.00 C636.2 788.05 678.3 786.25 701.0 786.00 C723.7 785.75 736.3 786.88 747.0 787.50 C757.7 788.12 758.7 789.78 765.0 789.70 C771.3 789.62 775.3 787.67 785.0 787.00 C794.7 786.33 805.3 785.55 823.0 785.70 C840.7 785.85 869.7 786.95 891.0 787.90 C912.3 788.85 928.3 790.63 951.0 791.40 C973.7 792.17 1014.3 792.32 1027.0 792.50 L1027 818.50 C1014.3 818.32 973.7 818.17 951.0 817.40 C928.3 816.63 912.3 814.85 891.0 813.90 C869.7 812.95 840.7 811.85 823.0 811.70 C805.3 811.55 794.7 812.33 785.0 813.00 C775.3 813.67 771.3 815.62 765.0 815.70 C758.7 815.78 757.7 814.12 747.0 813.50 C736.3 812.88 723.7 811.75 701.0 812.00 C678.3 812.25 636.2 814.05 611.0 815.00 C585.8 815.95 569.0 817.12 550.0 817.70 C531.0 818.28 505.8 818.37 497.0 818.50 Z"/><path d="M497 826.60 C505.8 826.47 531.0 826.38 550.0 825.80 C569.0 825.22 585.8 824.05 611.0 823.10 C636.2 822.15 678.3 820.35 701.0 820.10 C723.7 819.85 736.3 820.98 747.0 821.60 C757.7 822.22 758.7 823.88 765.0 823.80 C771.3 823.72 775.3 821.77 785.0 821.10 C794.7 820.43 805.3 819.65 823.0 819.80 C840.7 819.95 869.7 821.05 891.0 822.00 C912.3 822.95 928.3 824.73 951.0 825.50 C973.7 826.27 1014.3 826.42 1027.0 826.60 L1027 852.60 C1014.3 852.42 973.7 852.27 951.0 851.50 C928.3 850.73 912.3 848.95 891.0 848.00 C869.7 847.05 840.7 845.95 823.0 845.80 C805.3 845.65 794.7 846.43 785.0 847.10 C775.3 847.77 771.3 849.72 765.0 849.80 C758.7 849.88 757.7 848.22 747.0 847.60 C736.3 846.98 723.7 845.85 701.0 846.10 C678.3 846.35 636.2 848.15 611.0 849.10 C585.8 850.05 569.0 851.22 550.0 851.80 C531.0 852.38 505.8 852.47 497.0 852.60 Z"/></g>
<g clip-path="url(#bandclip)">
<path d="M734 718 L856 718 Q905 735 935 770 Q958 805 969 853 L677 853 L680 825 L702 797 L711 770 L723 755 L725 730 Z" fill="url(#dots)"/>
<path d="M553 860 A210 205 0 0 1 704 701 L833 701 A210 205 0 0 1 860 712 L725 712 Q660 722 640 745 Q600 790 585 860 Z" fill="url(#dots2)"/>
<path d="M704 698 Q763 694 833 698 L858 716 L704 716 Z" fill="url(#dots3)" opacity="0.7"/>
<path d="M739 794 L788 794 L772 819 L752 819 Z M712 727 L724 727 L722 752 L711 752 Z" fill="#45a2bf"/>
<rect x="754" y="583" width="27" height="122" fill="url(#dots3)" opacity="0.9"/>
<rect x="723" y="615" width="87" height="19" fill="url(#dots3)" opacity="0.9"/>
</g>
</svg>
<svg class="r" style="left:680px;top:856px" width="350" height="95" viewBox="0 0 350 95"><defs><pattern id="faint" width="5" height="9" patternUnits="userSpaceOnUse"><rect x="0.5" y="2" width="3.2" height="4.5" fill="#ecebe9"/></pattern></defs><rect x="0" y="0" width="190" height="90" fill="url(#faint)" opacity="0.4"/><rect x="200" y="0" width="80" height="90" fill="url(#faint)" opacity="0.15"/></svg>
<div class="r" style="left:497px;top:861px;width:182px;height:84px;background:#4aa3c2;"></div>
<div class="t" style="left:502.50px;top:867.18px;font-size:12.06px;letter-spacing:0.000px;color:#ffffff;font-weight:bold;transform:scaleX(0.9012);transform-origin:0 0;">Nom :</div>
<div class="t" style="left:502.50px;top:906.18px;font-size:12.06px;letter-spacing:0.000px;color:#ffffff;font-weight:bold;transform:scaleX(0.8683);transform-origin:0 0;">Prénom :</div>
<svg class="r" style="left:740px;top:866px" width="80" height="96" viewBox="0 0 80 96">
<defs><radialGradient id="glow"><stop offset="0" stop-color="#ffffff"/><stop offset="1" stop-color="#ffffff" stop-opacity="0"/></radialGradient></defs>
<path d="M38.9 3.4 L41.8 44 L38.9 94 L36 44 Z" fill="#4a86c5"/>
<path d="M4.6 47.9 L36 45.4 L70.4 47.9 L36 50.4 Z" fill="#4a86c5"/>
<g transform="translate(38.9,47.9)"><ellipse cx="-7.4" cy="-12.1" rx="6.3" ry="8.3" transform="rotate(-31.4 -7.4 -12.1)" fill="#e53a2a" stroke="#2a1a1a" stroke-width="0.7"/><ellipse cx="10.1" cy="-11.2" rx="6.3" ry="8.3" transform="rotate(42.0 10.1 -11.2)" fill="#7d2f96" stroke="#2a1a1a" stroke-width="0.7"/><ellipse cx="15.7" cy="2.7" rx="6.3" ry="8.3" transform="rotate(99.8 15.7 2.7)" fill="#8f4a3e" stroke="#2a1a1a" stroke-width="0.7"/><ellipse cx="7.4" cy="12.9" rx="6.3" ry="8.3" transform="rotate(150.2 7.4 12.9)" fill="#2e9131" stroke="#2a1a1a" stroke-width="0.7"/><ellipse cx="-9.3" cy="12" rx="6.3" ry="8.3" transform="rotate(217.8 -9.3 12)" fill="#f2b526" stroke="#2a1a1a" stroke-width="0.7"/><ellipse cx="-15.8" cy="-1.4" rx="6.3" ry="8.3" transform="rotate(-84.9 -15.8 -1.4)" fill="#ef8450" stroke="#2a1a1a" stroke-width="0.7"/>
<circle cx="0" cy="0" r="6.5" fill="url(#glow)"/>
</g>
</svg>
<div class="t" style="left:809.90px;top:908.11px;font-size:6.83px;letter-spacing:0.387px;color:#111;font-weight:bold;">Coopération</div>
<div class="t" style="left:809.90px;top:917.31px;font-size:6.83px;letter-spacing:0.340px;color:#111;font-weight:bold;">Missionnaire</div>
<div class="t" style="left:809.90px;top:925.92px;font-size:6.00px;letter-spacing:-0.243px;color:#333;">Diocèse de Vannes</div>
<svg class="r" style="left:900px;top:884px" width="62" height="54" viewBox="0 0 62 54">
<circle cx="28.9" cy="30.2" r="16.8" fill="#f3e63c" stroke="#2a9a9a" stroke-width="0.8"/>
<path d="M5.3 32.3 Q25 21.7 45.5 34.4 Q25 44.5 5.3 32.3 Z" fill="#a9d7dc" stroke="#2a9a9a" stroke-width="0.9"/>
<path d="M5.8 32.3 Q25 23.5 43 34 " fill="none" stroke="#ffffff" stroke-width="0.8" opacity="0.8"/>
<path d="M38 29.5 L54.3 38.6 M38 39.2 L54.6 31" stroke="#2a9a9a" stroke-width="0.9"/>
<path d="M16.4 3.2 L19.9 50.7 M8.7 9.4 Q16 6 24.7 8" fill="none" stroke="#2a9a9a" stroke-width="0.9"/>
</svg>
<div class="t" style="left:905.70px;top:935.83px;font-size:6.10px;letter-spacing:-0.243px;color:#3a6cb0;font-style:italic;">Diocèse de Vannes</div>
<div class="r" style="left:1563px;top:175px;width:339px;height:45px;background:#ffffff;box-sizing:border-box;border:1px solid #cfcfcf;"></div>
<div class="t" style="left:1580.40px;top:190.92px;font-size:16.86px;letter-spacing:-0.195px;color:#999999;">Rechercher "Bates"</div>
<div class="r" style="left:1562px;top:238px;width:319px;height:51px;background:#f8f8f8;"></div>
<div class="r" style="left:1562px;top:293px;width:319px;height:51px;background:#f8f8f8;"></div>
<div class="r" style="left:1562px;top:462px;width:319px;height:51px;background:#f8f8f8;"></div>
<div class="r" style="left:1562px;top:517px;width:319px;height:51px;background:#f8f8f8;"></div>
<div class="r" style="left:1900px;top:238px;width:19px;height:670px;background:#efefef;"></div>
<div class="r" style="left:1900px;top:259px;width:19px;height:613px;background:#c9c9c9;"></div>
<svg class="r" style="left:1901px;top:243px;" width="17" height="12" viewBox="0 0 17 12"><path d="M4 9 L8.5 4.5 L13 9" fill="none" stroke="#555" stroke-width="1.9"/></svg>
<svg class="r" style="left:1901px;top:891px;" width="17" height="12" viewBox="0 0 17 12"><path d="M4 3.5 L8.5 8 L13 3.5" fill="none" stroke="#555" stroke-width="1.9"/></svg>
<div class="r" style="left:1560px;top:908px;width:345px;height:1px;background:#cccccc;"></div>
<div class="t" style="left:1618.80px;top:254.13px;font-size:19.91px;letter-spacing:0.000px;color:#4b4b4b;transform:scaleX(0.9548);transform-origin:0 0;">Exporter un fichier PDF</div>
<svg class="r" style="left:1854px;top:257px;" width="17" height="12" viewBox="0 0 17 12"><path d="M2.5 3 L8.5 9 L14.5 3" fill="none" stroke="#4b4b4b" stroke-width="2.6"/></svg>
<div class="t" style="left:1618.80px;top:309.13px;font-size:19.91px;letter-spacing:0.000px;color:#4b4b4b;transform:scaleX(0.9345);transform-origin:0 0;">Créer un fichier PDF</div>
<svg class="r" style="left:1854px;top:312px;" width="17" height="12" viewBox="0 0 17 12"><path d="M2.5 3 L8.5 9 L14.5 3" fill="none" stroke="#4b4b4b" stroke-width="2.6"/></svg>
<div class="t" style="left:1618.80px;top:364.63px;font-size:19.91px;letter-spacing:-0.198px;color:#4b4b4b;">Modifier le fichier PDF</div>
<div class="t" style="left:1618.80px;top:421.63px;font-size:19.91px;letter-spacing:-0.252px;color:#4b4b4b;">Commentaire</div>
<div class="t" style="left:1618.80px;top:478.53px;font-size:19.91px;letter-spacing:-0.250px;color:#4b4b4b;">Combinaison de fichiers</div>
<svg class="r" style="left:1854px;top:481.4px;" width="17" height="12" viewBox="0 0 17 12"><path d="M2.5 3 L8.5 9 L14.5 3" fill="none" stroke="#4b4b4b" stroke-width="2.6"/></svg>
<div class="t" style="left:1618.80px;top:532.93px;font-size:19.91px;letter-spacing:0.000px;color:#4b4b4b;transform:scaleX(0.9501);transform-origin:0 0;">Organiser les pages</div>
<svg class="r" style="left:1854px;top:535.8px;" width="17" height="12" viewBox="0 0 17 12"><path d="M2.5 3 L8.5 9 L14.5 3" fill="none" stroke="#4b4b4b" stroke-width="2.6"/></svg>
<div class="t" style="left:1618.80px;top:588.73px;font-size:19.91px;letter-spacing:0.000px;color:#4b4b4b;transform:scaleX(0.9541);transform-origin:0 0;">Biffer</div>
<div class="t" style="left:1618.80px;top:645.73px;font-size:19.91px;letter-spacing:0.039px;color:#4b4b4b;">Protection</div>
<div class="t" style="left:1618.80px;top:702.73px;font-size:19.91px;letter-spacing:0.000px;color:#4b4b4b;transform:scaleX(0.9656);transform-origin:0 0;">Optimiser le fichier PDF</div>
<div class="t" style="left:1618.80px;top:760.33px;font-size:19.91px;letter-spacing:0.000px;color:#4b4b4b;transform:scaleX(0.9648);transform-origin:0 0;">Remplir et signer</div>
<div class="t" style="left:1618.80px;top:817.33px;font-size:19.91px;letter-spacing:-0.209px;color:#4b4b4b;">Envoyer pour révision</div>
<div class="t" style="left:1618.80px;top:874.23px;font-size:19.91px;letter-spacing:-0.188px;color:#4b4b4b;">Autres outils</div>
<svg class="r" style="left:1576px;top:248px;" width="30" height="31" viewBox="0 0 30 31"><path d="M2 2 H16 L21.5 7.5 V25 H2 Z" fill="#cfe9ea" stroke="#1e9a9c" stroke-width="2.4" stroke-linejoin="round"/><path d="M7 13.5 c2 -1 3 -3 3.5 -5 M10.5 8.5 c0.5 2 2 4 4 5 M8 16 c2 -1 4 -1.6 6 -1.5" fill="none" stroke="#1e9a9c" stroke-width="1"/><circle cx="21.6" cy="22.5" r="8.4" fill="#fafafa"/><circle cx="21.6" cy="22.5" r="7.5" fill="#1e9a9c"/><path d="M17 22.5 H24 M20.8 19 L24.5 22.5 L20.8 26" fill="none" stroke="#fff" stroke-width="2.3"/></svg>
<svg class="r" style="left:1576px;top:303px;" width="30" height="31" viewBox="0 0 30 31"><path d="M2 2 H16 L21.5 7.5 V25 H2 Z" fill="#f8d9dc" stroke="#e0434b" stroke-width="2.4" stroke-linejoin="round"/><path d="M7 13.5 c2 -1 3 -3 3.5 -5 M10.5 8.5 c0.5 2 2 4 4 5 M8 16 c2 -1 4 -1.6 6 -1.5" fill="none" stroke="#e0434b" stroke-width="1"/><circle cx="21.6" cy="22.5" r="8.4" fill="#fafafa"/><circle cx="21.6" cy="22.5" r="7.5" fill="#e0434b"/><path d="M17.4 22.5 H25.8 M21.6 18.3 V26.7" fill="none" stroke="#fff" stroke-width="2.3"/></svg>
<svg class="r" style="left:1576px;top:360px;" width="29" height="29" viewBox="0 0 29 29"><rect x="1.5" y="1.5" width="26" height="10" rx="1.5" fill="#f6d6ea" stroke="#de3f9d" stroke-width="2.4"/><rect x="1.5" y="15.5" width="12" height="11" rx="1.5" fill="#f6d6ea" stroke="#de3f9d" stroke-width="2.4"/><path d="M18 17.5 H27.5 M18 21.5 H27.5 M18 25.5 H27.5" stroke="#de3f9d" stroke-width="1.7"/></svg>
<svg class="r" style="left:1576px;top:418px;" width="27" height="28" viewBox="0 0 27 28"><path d="M3.5 1 H22.5 Q25.5 1 25.5 4 V18 Q25.5 21 22.5 21 H12 L7.5 26.5 V21 H3.5 Q0.5 21 0.5 18 V4 Q0.5 1 3.5 1 Z" fill="#d9b41c"/><path d="M6.5 8 H19.5 M6.5 13 H16" stroke="#fff" stroke-width="2.4"/></svg>
<svg class="r" style="left:1574px;top:471px;" width="32" height="32" viewBox="0 0 32 32"><path d="M2.5 2.5 H11.5 L15 6 V20 H2.5 Z" fill="#ffffff" stroke="#6b6be6" stroke-width="2.6" stroke-linejoin="round"/><path d="M5.5 12 c1.2 -0.8 2 -2 2.2 -3.5 M7.7 8.5 c0.5 1.5 1.5 3 3 3.5" fill="none" stroke="#6b6be6" stroke-width="0.9"/><path d="M16 1 H26.5 L31.5 6 V20.5 H16 Z" fill="#6b6be6"/><path d="M26.5 1 V6 H31.5" fill="#fff" stroke="#fff" stroke-width="0.6"/><path d="M13 16 V24 H8 L15.5 31 L23 24 H18 V16 Z" fill="#6b6be6"/></svg>
<svg class="r" style="left:1576px;top:528px;" width="29" height="28" viewBox="0 0 29 28"><rect x="16.5" y="2.6" width="10.2" height="22.6" rx="1.8" fill="#e3f3d6" stroke="#7fcb45" stroke-width="2.5"/><path d="M2.6 13.7 V25.2 H13.8 M2.6 13.7 H13.8" fill="none" stroke="#7fcb45" stroke-width="2.5" stroke-dasharray="2.4 1.6"/><path d="M14.8 3.3 Q9 3.3 6 8" fill="none" stroke="#7fcb45" stroke-width="2.6"/><path d="M2.2 3.8 L2.2 11.2 L9.6 11.2 Z" fill="#7fcb45"/></svg>
<svg class="r" style="left:1575px;top:585px;" width="30" height="26" viewBox="0 0 30 26"><rect x="12" y="18" width="17" height="6.5" rx="1" fill="#df3a93"/><path d="M22 2.8 C23.5 1.5 26 1.8 26.8 3.5 C27.3 4.6 27 5.8 26.2 6.5 L14.2 18.2 L9.6 15 Z" fill="#f4cce2" stroke="#df3a93" stroke-width="2.3" stroke-linejoin="round"/><path d="M9.6 15 L1.2 22.5 Q0.8 24.5 3 24.5 H10.5 L14.2 18.2 Z" fill="#df3a93"/></svg>
<svg class="r" style="left:1577px;top:640px;" width="26" height="31" viewBox="0 0 26 31"><path d="M13 2 Q19 5 24 4.5 V16 Q24 24.5 13 29 Q2 24.5 2 16 V4.5 Q7 5 13 2 Z" fill="#dcdcfa" stroke="#6b6be6" stroke-width="2.6" stroke-linejoin="round"/><path d="M13 2 V29 Q24 24.5 24 16 V4.5 Q19 5 13 2 Z" fill="#ffffff" stroke="#6b6be6" stroke-width="2.6" stroke-linejoin="round"/></svg>
<svg class="r" style="left:1579px;top:696px;" width="23" height="32" viewBox="0 0 23 32"><path d="M1.8 1.8 H15 L21 7.8 V25 H1.8 Z" fill="#f8d9dc" stroke="#e0434b" stroke-width="2.4" stroke-linejoin="round"/><path d="M6.5 15.5 c2 -1.2 3 -3.5 3.5 -6 M10 9.5 c0.5 2.4 2 4.8 4.5 6 M7.5 18 c2.3 -1.2 5 -1.8 7 -1.6" fill="none" stroke="#e0434b" stroke-width="1.1"/><path d="M2 29.5 H9 M13 29.5 H21" stroke="#e0434b" stroke-width="1.4"/><circle cx="11" cy="29.5" r="1.6" fill="none" stroke="#e0434b" stroke-width="1.2"/></svg>
<svg class="r" style="left:1574px;top:753px;" width="34" height="31" viewBox="0 0 34 31"><g transform="translate(3,28.3) rotate(-41)"><path d="M0.5 0 L6 -4.1 H29 A4.1 4.1 0 0 1 29 4.1 H6 Z" fill="#e5d8f8" stroke="#9a5ce6" stroke-width="2.5" stroke-linejoin="round"/><path d="M6 -4.1 L8 4.1" stroke="#9a5ce6" stroke-width="1.2"/></g><path d="M3 28.5 H12.5 c1.2 -1 2.2 -4.3 3.5 -4.3 c1.1 0 0.4 3.8 1.7 3.8 c1.3 0 1.8 -3.4 3.1 -3.4 c1.1 0 0.5 3.4 1.8 3.4 c1.3 0 2 -1.6 3 -3" fill="none" stroke="#9a5ce6" stroke-width="2.4" stroke-linecap="round" stroke-linejoin="round"/></svg>
<svg class="r" style="left:1576px;top:810px;" width="29" height="31" viewBox="0 0 29 31"><path d="M2 2 H13.5 L19.5 8 V22 H2 Z" fill="#f7f1c8" stroke="#dbb80a" stroke-width="2.4" stroke-linejoin="round"/><path d="M13 2.2 V8.6 H19.5" fill="none" stroke="#dbb80a" stroke-width="2"/><path d="M13 14.5 H27.5 V25.5 H18 L15 29 V25.5 H13 Z" fill="#dbb80a"/><path d="M17 18.5 H23.5 M17 21.5 H23.5" stroke="#fff" stroke-width="1.5"/></svg>
<svg class="r" style="left:1576px;top:866px;" width="32" height="36" viewBox="0 0 32 36"><path d="M2.8 23.5 L14.5 11.5" stroke="#6e6e6e" stroke-width="4.2" stroke-linecap="round"/><circle cx="18.5" cy="8" r="5.2" fill="none" stroke="#6e6e6e" stroke-width="3.8"/><path d="M19 7.5 L26 0.5 L27 7 Z" fill="#fafafa"/><circle cx="21.5" cy="24.2" r="9" fill="#fafafa"/><circle cx="21.5" cy="24.2" r="7.6" fill="#6e6e6e"/><path d="M17 24.2 H26 M21.5 19.7 V28.7" stroke="#fafafa" stroke-width="2.4"/></svg>
<div class="t" style="left:1577.50px;top:935.98px;font-size:15.84px;letter-spacing:-0.083px;color:#4b4b4b;font-weight:bold;">Convertissez et modifiez des fichiers PDF</div>
<div class="t" style="left:1654.40px;top:955.48px;font-size:15.84px;letter-spacing:-0.079px;color:#4b4b4b;font-weight:bold;">avec Acrobat Pro DC</div>
<div class="t" style="left:1655.30px;top:987.63px;font-size:15.55px;letter-spacing:0.000px;color:#1c62b9;transform:scaleX(0.9282);transform-origin:0 0;">Tester la version d'essai</div>
<div class="r" style="left:60px;top:1030px;width:430px;height:50px;background:#f0f0f0;"></div>
<svg class="r" style="left:20px;top:1045px;" width="21" height="21" viewBox="0 0 21 21"><path d="M0 3 L8.6 1.8 V9.9 H0 Z M9.8 1.6 L21 0 V9.9 H9.8 Z M0 11.1 H8.6 V19.2 L0 18 Z M9.8 11.1 H21 V21 L9.8 19.4 Z" fill="#fff"/></svg>
<svg class="r" style="left:70px;top:1041px;" width="30" height="28" viewBox="0 0 30 28"><circle cx="14.5" cy="14" r="11.5" fill="none" stroke="#000" stroke-width="3.2"/></svg>
<div class="t" style="left:111.00px;top:1047.68px;font-size:17.73px;letter-spacing:-0.227px;color:#333333;">Taper ici pour rechercher</div>
<svg class="r" style="left:456px;top:1044px;" width="17" height="22" viewBox="0 0 17 22"><rect x="4.5" y="1" width="8" height="13.5" rx="4" fill="none" stroke="#333" stroke-width="1.6"/><path d="M1.5 10 Q1.5 17 8.5 17 Q15.5 17 15.5 10 M8.5 17 V21 M4 21 H13" fill="none" stroke="#333" stroke-width="1.6"/></svg>
<svg class="r" style="left:508px;top:1044px;" width="24" height="22" viewBox="0 0 24 22"><rect x="2" y="5" width="13.5" height="11.5" fill="none" stroke="#fff" stroke-width="1.5"/><path d="M0.5 1 V3 H17 V1 M0.5 21 V19 H17 V21 M21.5 0.5 V7 M21.5 10.5 V21.5" fill="none" stroke="#fff" stroke-width="1.5"/><rect x="20" y="7" width="3" height="3.5" fill="#fff"/></svg>
<div class="r" style="left:621px;top:1077px;width:51px;height:3px;background:#76b9ed;"></div>
<div class="r" style="left:745px;top:1077px;width:51px;height:3px;background:#76b9ed;"></div>
<div class="r" style="left:993px;top:1077px;width:51px;height:3px;background:#76b9ed;"></div>
<div class="r" style="left:1055px;top:1077px;width:51px;height:3px;background:#76b9ed;"></div>
<div class="r" style="left:1112px;top:1030px;width:56px;height:50px;background:#3c3c3c;"></div>
<div class="r" style="left:1168px;top:1030px;width:5px;height:50px;background:#2f2f2f;"></div>
<div class="r" style="left:1112px;top:1077px;width:61px;height:3px;background:#8ec5f0;"></div>
<svg class="r" style="left:569px;top:1040px" width="31" height="30" viewBox="0 0 31 30"><defs><linearGradient id="sk" x1="0" y1="0" x2="0" y2="1"><stop offset="0" stop-color="#27b6f0"/><stop offset="1" stop-color="#0a8ad4"/></linearGradient></defs><path d="M8 1 C3.5 1 1 4 1 8 C1 9.5 1.5 10.5 2 11.5 C1.7 12.5 1.5 13.5 1.5 15 C1.5 22.5 7.5 28.5 15 28.5 C16.3 28.5 17.5 28.3 18.5 28 C19.5 28.6 20.7 29 22 29 C26 29 29 26 29 22 C29 20.8 28.7 19.7 28.2 18.7 C28.5 17.6 28.6 16.5 28.6 15 C28.6 7.5 22.6 1.5 15 1.5 C13.8 1.5 12.6 1.6 11.5 2 C10.5 1.3 9.3 1 8 1 Z" fill="url(#sk)"/><text x="15" y="21.5" font-family="Liberation Sans" font-weight="bold" font-size="17" fill="#fff" text-anchor="middle">S</text></svg>
<svg class="r" style="left:631px;top:1042px" width="30" height="25" viewBox="0 0 30 25"><path d="M0.5 2 Q0.5 0.5 2 0.5 H9.5 L12 3 H28 Q29 3 29 4 V24 H0.5 Z" fill="#e8c254"/><path d="M0.5 4.5 H29 V24 H0.5 Z" fill="#f8d775"/><rect x="2" y="1.5" width="5" height="1.5" fill="#fff"/><path d="M9 24 V14 H21 V24 H17.5 V17 H12.5 V24 Z" fill="#2a9be0"/></svg>
<svg class="r" style="left:693px;top:1041px" width="29" height="28" viewBox="0 0 29 28"><rect x="12" y="6" width="16" height="16" fill="#fff"/><path d="M12.5 8.5 L20 14 L27.5 8.5 V21 H12.5 Z" fill="#0f6fc6"/><path d="M0 3.5 L16 0 V28 L0 24.5 Z" fill="#0f6fc6"/><ellipse cx="8" cy="14" rx="4" ry="5.2" fill="none" stroke="#fff" stroke-width="2.3"/></svg>
<svg class="r" style="left:755px;top:1041px" width="29" height="29" viewBox="0 0 29 29"><circle cx="14.5" cy="14.5" r="14" fill="#db4437"/><path d="M14.5 14.5 L2.4 21.5 A14 14 0 0 0 18 28.1 Z" fill="#0f9d58"/><path d="M14.5 14.5 L18 28.1 A14 14 0 0 0 28.5 14.5 L28.5 7 Z" fill="#ffcd40"/><path d="M14.5 14.5 L28.5 7.5 A14 14 0 0 0 14.5 0.5 A14 14 0 0 0 2 8 Z" fill="#db4437"/><circle cx="14.5" cy="14.5" r="6.5" fill="#fff"/><circle cx="14.5" cy="14.5" r="5" fill="#4285f4"/></svg>
<svg class="r" style="left:817px;top:1041px" width="29" height="28" viewBox="0 0 29 28"><rect x="13" y="4" width="15" height="20" fill="#fff"/><rect x="14.5" y="5.5" width="12" height="17" fill="#1e7145" opacity="0.2"/><rect x="18.5" y="7.0" width="7" height="1.6" fill="#1e7145"/><rect x="18.5" y="10.3" width="7" height="1.6" fill="#1e7145"/><rect x="18.5" y="13.6" width="7" height="1.6" fill="#1e7145"/><rect x="18.5" y="16.9" width="7" height="1.6" fill="#1e7145"/><rect x="18.5" y="20.2" width="7" height="1.6" fill="#1e7145"/><path d="M0 3.5 L16 0 V28 L0 24.5 Z" fill="#1e7145"/><text x="8" y="19" font-family="Liberation Sans" font-weight="bold" font-size="12" fill="#fff" text-anchor="middle">X</text></svg>
<svg class="r" style="left:879px;top:1041px" width="29" height="28" viewBox="0 0 29 28"><rect x="13" y="4" width="15" height="20" fill="#fff"/><rect x="14.5" y="5.5" width="12" height="17" fill="#d04525" opacity="0.2"/><rect x="18.5" y="7.0" width="7" height="1.6" fill="#d04525"/><rect x="18.5" y="10.3" width="7" height="1.6" fill="#d04525"/><rect x="18.5" y="13.6" width="7" height="1.6" fill="#d04525"/><rect x="18.5" y="16.9" width="7" height="1.6" fill="#d04525"/><rect x="18.5" y="20.2" width="7" height="1.6" fill="#d04525"/><path d="M0 3.5 L16 0 V28 L0 24.5 Z" fill="#d04525"/><text x="8" y="19" font-family="Liberation Sans" font-weight="bold" font-size="12" fill="#fff" text-anchor="middle">P</text></svg>
<svg class="r" style="left:941px;top:1041px" width="29" height="28" viewBox="0 0 29 28"><rect x="13" y="4" width="15" height="20" fill="#fff"/><rect x="14.5" y="5.5" width="12" height="17" fill="#077568" opacity="0.2"/><rect x="18.5" y="7.0" width="7" height="1.6" fill="#077568"/><rect x="18.5" y="10.3" width="7" height="1.6" fill="#077568"/><rect x="18.5" y="13.6" width="7" height="1.6" fill="#077568"/><rect x="18.5" y="16.9" width="7" height="1.6" fill="#077568"/><rect x="18.5" y="20.2" width="7" height="1.6" fill="#077568"/><path d="M0 3.5 L16 0 V28 L0 24.5 Z" fill="#077568"/><text x="8" y="19" font-family="Liberation Sans" font-weight="bold" font-size="12" fill="#fff" text-anchor="middle">P</text></svg>
<svg class="r" style="left:1003px;top:1041px" width="29" height="28" viewBox="0 0 29 28"><rect x="13" y="4" width="15" height="20" fill="#fff"/><rect x="14.5" y="5.5" width="12" height="17" fill="#2b579a" opacity="0.2"/><rect x="18.5" y="7.0" width="7" height="1.6" fill="#2b579a"/><rect x="18.5" y="10.3" width="7" height="1.6" fill="#2b579a"/><rect x="18.5" y="13.6" width="7" height="1.6" fill="#2b579a"/><rect x="18.5" y="16.9" width="7" height="1.6" fill="#2b579a"/><rect x="18.5" y="20.2" width="7" height="1.6" fill="#2b579a"/><path d="M0 3.5 L16 0 V28 L0 24.5 Z" fill="#2b579a"/><text x="8" y="19" font-family="Liberation Sans" font-weight="bold" font-size="12" fill="#fff" text-anchor="middle">W</text></svg>
<svg class="r" style="left:1066px;top:1041px" width="28" height="28" viewBox="0 0 28 28"><path d="M3 12 C4 4.5 9.5 1 15 1 C22.5 1 27 6.5 27 13.5 V16 H9.5 C10 20.5 13 22.5 17 22.5 C20.5 22.5 23.5 21 26 19.5 V25.5 C23.5 27 20.5 27.8 17 27.8 C9 27.8 3.5 23 3.5 15.5 C3.5 11 6 7 10 5 C7.5 7 6.5 9.5 6.3 11 Z M9.8 11 H20.5 C20.5 8 18.3 6 15.3 6 C12.3 6 10.2 8 9.8 11 Z" fill="#1f8ce6"/></svg>
<svg class="r" style="left:1127px;top:1040px" width="30" height="28" viewBox="0 0 30 28"><defs><linearGradient id="ar" x1="0" y1="0" x2="0" y2="1"><stop offset="0" stop-color="#f0151c"/><stop offset="1" stop-color="#a80c14"/></linearGradient></defs><rect x="0.5" y="0.5" width="28" height="27" fill="url(#ar)"/><path d="M14.2 5.5 c-1.5 0 -1.5 2.8 0 5.8 c1.5 3 3.8 5.3 5.2 5.5 c2 0.3 1.8 -1.5 0 -1.8 c-3 -0.5 -7.5 0.8 -9.4 2.4 c-1.4 1.4 0 2.4 1.2 0.9 c1.5 -1.8 2.7 -4.8 3.3 -7.6 c0.5 -2.1 0.6 -5.2 -0.3 -5.2 z" fill="none" stroke="#fff" stroke-width="1.3"/></svg>
<svg class="r" style="left:1602px;top:1045px;" width="21" height="20" viewBox="0 0 21 20"><circle cx="14" cy="5" r="3.8" fill="none" stroke="#fff" stroke-width="1.2"/><path d="M8.5 14.5 c0.5 -3.5 2.5 -5.3 5.5 -5.3 s5 1.8 5.5 5.3" fill="none" stroke="#fff" stroke-width="1.2"/><circle cx="7" cy="10" r="3.5" fill="#111" stroke="#fff" stroke-width="1.2"/><path d="M1 19.5 c0.5 -3.5 2.5 -5.3 6 -5.3 s5.3 1.8 5.8 5.3" fill="none" stroke="#fff" stroke-width="1.2"/></svg>
<svg class="r" style="left:1648px;top:1049px;" width="18" height="10" viewBox="0 0 18 10"><path d="M1 9 L9 1.3 L17 9" fill="none" stroke="#fff" stroke-width="1.2"/></svg>
<svg class="r" style="left:1677px;top:1049px;" width="21" height="12" viewBox="0 0 21 12"><rect x="0.8" y="0.8" width="17.5" height="10.4" fill="none" stroke="#fff" stroke-width="1.1"/><rect x="2.5" y="2.5" width="8" height="7" fill="#fff"/><rect x="18.5" y="3.8" width="1.8" height="4.4" fill="#fff"/></svg>
<svg class="r" style="left:1706px;top:1045px;" width="23" height="19" viewBox="0 0 23 19"><path d="M1 6.5 H5 L10.5 1.5 V17.5 L5 12.5 H1 Z" fill="none" stroke="#fff" stroke-width="1.1"/><path d="M13.5 7.5 q1.2 2 0 4 M16.5 4.5 q3 5 0 10 M19.5 1.5 q4.5 8 0 16" fill="none" stroke="#fff" stroke-width="1" opacity="0.9"/></svg>
<svg class="r" style="left:1739px;top:1046px;" width="18" height="18" viewBox="0 0 18 18"><path d="M1 16.5 A15.5 15.5 0 0 1 16.5 1 M4 16.5 A12.5 12.5 0 0 1 16.5 4 M7 16.5 A9.5 9.5 0 0 1 16.5 7 M10 16.5 A6.5 6.5 0 0 1 16.5 10" fill="none" stroke="#fff" stroke-width="1.1"/><circle cx="15" cy="15.2" r="1.6" fill="#fff"/></svg>
<div class="t" style="left:1791.60px;top:1036.09px;font-size:14.53px;letter-spacing:0.000px;color:#ffffff;transform:scaleX(0.9019);transform-origin:0 0;">10:45</div>
<div class="t" style="left:1771.50px;top:1059.59px;font-size:14.53px;letter-spacing:0.128px;color:#ffffff;">18/09/2019</div>
<svg class="r" style="left:1868px;top:1045px;" width="22" height="21" viewBox="0 0 22 21"><path d="M1 1 H21 V17 H13.5 L11 19.5 L8.5 17 H1 Z" fill="none" stroke="#fff" stroke-width="1.2"/></svg>
<div class="r" style="left:1914px;top:1030px;width:1px;height:50px;background:#555555;"></div>
</body></html>
